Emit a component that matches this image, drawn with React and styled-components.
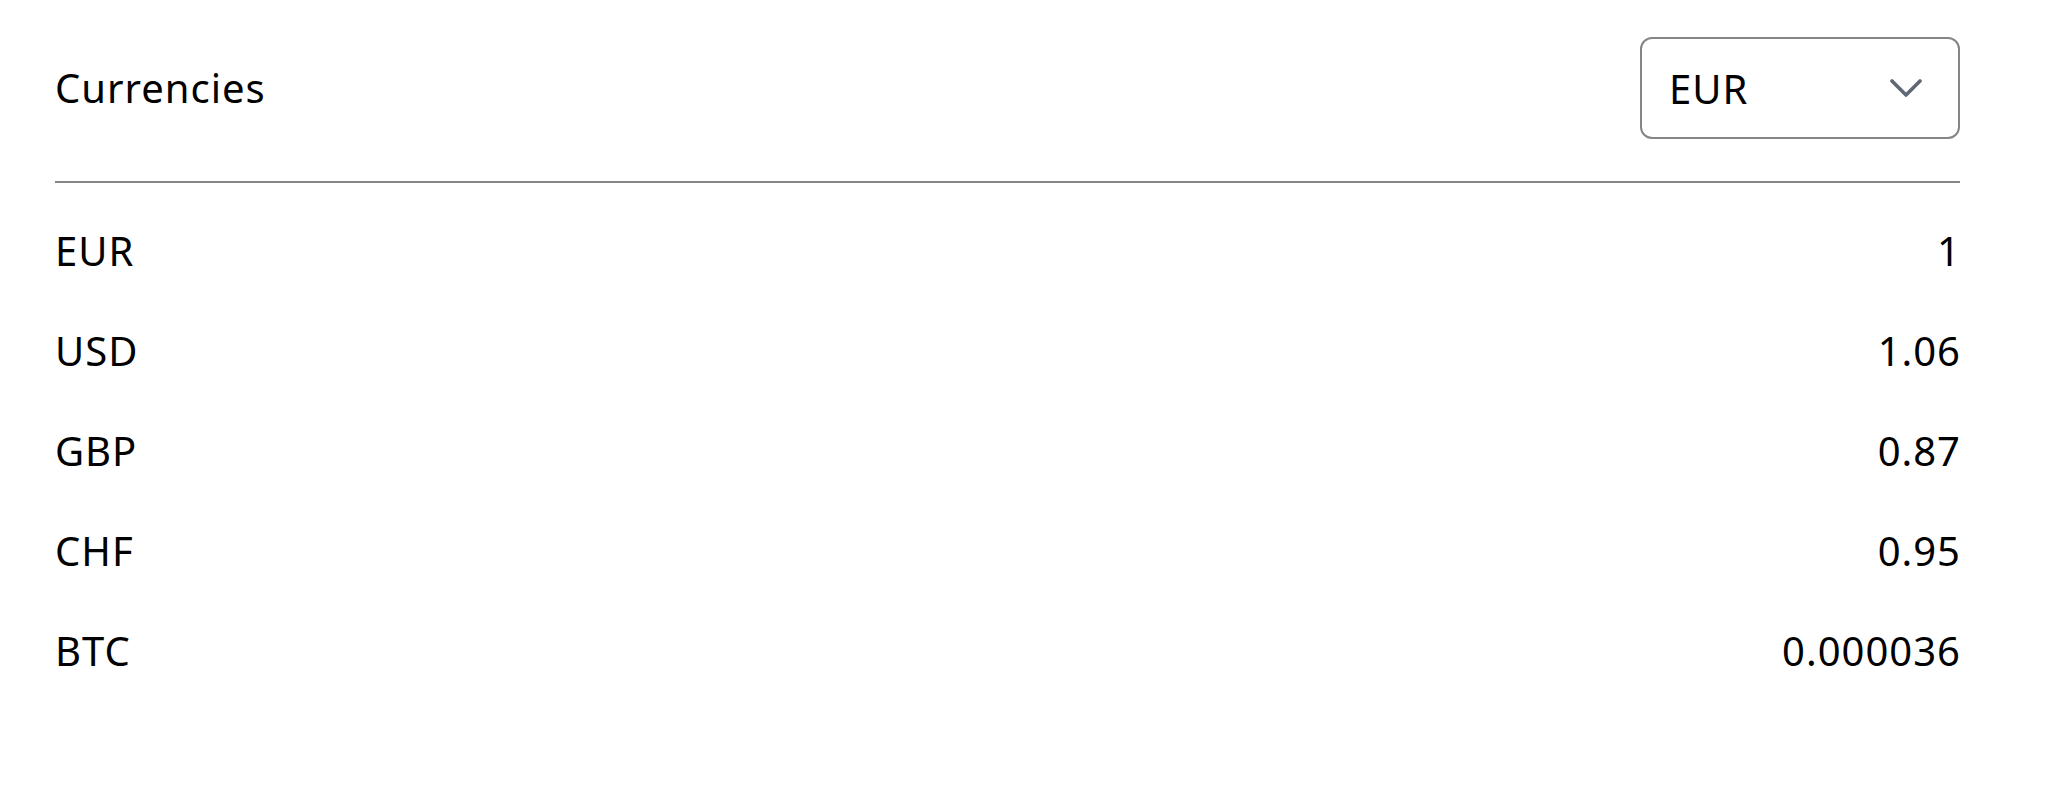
import React from "react";
import styled, { createGlobalStyle } from "styled-components";

const Global = createGlobalStyle`
  html, body { margin: 0; padding: 0; background: #fff; }
  body { font-family: "Noto Sans", "Open Sans", sans-serif; color: #000; letter-spacing: 1px; }
`;

const Page = styled.div`
  padding: 37px 0 0 55px;
  width: 1905px;
`;

const Header = styled.div`
  display: flex;
  align-items: center;
  justify-content: space-between;
  padding-bottom: 42px;
  border-bottom: 2px solid #858585;
`;

const Title = styled.h2`
  margin: 0;
  font-size: 40px;
  font-weight: 400;
  line-height: 1;
`;

const Select = styled.button`
  box-sizing: border-box;
  width: 320px;
  height: 102px;
  display: flex;
  align-items: center;
  justify-content: space-between;
  padding: 0 36px 0 27px;
  border: 2px solid #858585;
  border-radius: 12px;
  background: #fff;
  font-family: inherit;
  font-size: 40px;
  letter-spacing: 1px;
  color: #000;
  cursor: pointer;
`;

const Chevron = styled.svg`
  width: 32px;
  height: 19px;
  display: block;
`;

const List = styled.ul`
  list-style: none;
  margin: 0;
  padding: 18px 0 0;
`;

const Row = styled.li`
  display: flex;
  justify-content: space-between;
  align-items: center;
  height: 100px;
  font-size: 40px;
  line-height: 100px;
`;

const Code = styled.span``;
const Rate = styled.span`
  text-align: right;
  margin-right: -1px;
`;

const rates = [
  ["EUR", "1"],
  ["USD", "1.06"],
  ["GBP", "0.87"],
  ["CHF", "0.95"],
  ["BTC", "0.000036"],
];

export default function App() {
  return (
    <>
      <Global />
      <Page>
        <Header>
          <Title>Currencies</Title>
          <Select type="button">
            <span>EUR</span>
            <Chevron viewBox="0 0 32 19" fill="none">
              <path
                d="M2 2 L16 16 L30 2"
                stroke="#5f6775"
                strokeWidth="3.6"
                strokeLinecap="round"
                strokeLinejoin="round"
              />
            </Chevron>
          </Select>
        </Header>
        <List>
          {rates.map(([c, r]) => (
            <Row key={c}>
              <Code>{c}</Code>
              <Rate>{r}</Rate>
            </Row>
          ))}
        </List>
      </Page>
    </>
  );
}
